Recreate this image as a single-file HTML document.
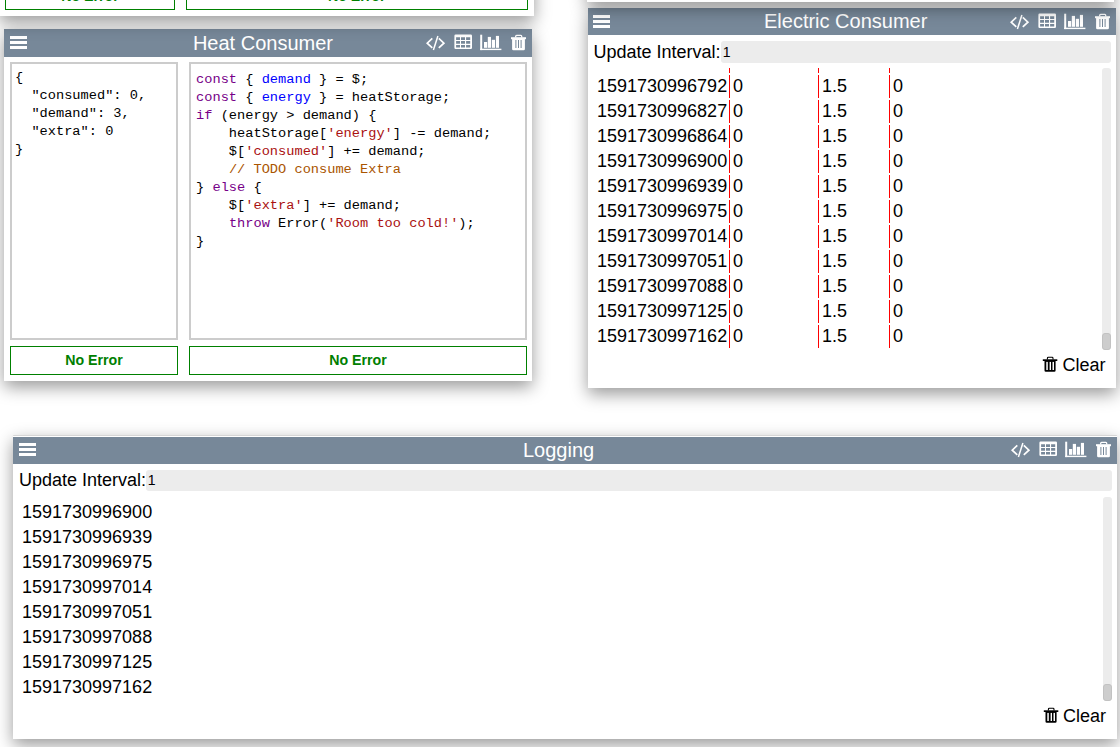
<!DOCTYPE html>
<html><head><meta charset="utf-8">
<style>
html,body{margin:0;padding:0;}
body{width:1120px;height:747px;overflow:hidden;position:relative;background:#fff;font-family:"Liberation Sans",sans-serif;color:#000;}
.p{position:absolute;background:#fff;box-shadow:0 6px 16px rgba(0,0,0,0.4);}
.hd{position:absolute;background:#778899;color:#fff;}
.ttl{position:absolute;font-size:20px;line-height:20px;white-space:nowrap;}
.ham{position:absolute;width:16.5px;height:13px;}
.ham i{position:absolute;left:0;width:16.5px;height:3px;background:#fff;}
.icons{position:absolute;width:101px;height:17px;}
.ta{position:absolute;border:2px solid #ccc;box-sizing:border-box;font-family:"Liberation Mono",monospace;font-size:13.66px;line-height:18px;white-space:pre;color:#000;}
.btn{position:absolute;border:1px solid #008000;box-sizing:border-box;color:#008000;font-weight:bold;font-size:14.2px;text-align:center;}
.lbl{position:absolute;font-size:18px;line-height:20px;white-space:nowrap;}
.inp{position:absolute;background:#ececec;border-radius:3px;}
.inp span{position:absolute;font-size:14px;line-height:14px;}
.trk{position:absolute;background:#ececec;border-radius:3px;}
.thm{position:absolute;background:#cdcdcd;border:1px solid #c2c2c2;box-sizing:border-box;border-radius:3px;}
.row{position:absolute;font-size:18px;line-height:20px;white-space:nowrap;}
.sep{position:absolute;width:1px;background:#f00;}
.clr{position:absolute;font-size:18px;line-height:20px;white-space:nowrap;}
.kw{color:#708}.df{color:#00f}.st{color:#a11}.cm{color:#a50}
</style></head><body>

<!-- top-left panel (mostly offscreen) -->
<div class="p" style="left:-1px;top:-100px;width:535px;height:115.7px;z-index:2;">
  <div class="btn" style="left:6px;top:70px;width:170px;height:40px;"><div style="position:absolute;left:0;right:0;top:17px;">No Error</div></div>
  <div class="btn" style="left:187px;top:70px;width:341.6px;height:40px;"><div style="position:absolute;left:0;right:0;top:17px;">No Error</div></div>
</div>

<!-- top-right panel (mostly offscreen) -->
<div class="p" style="left:587px;top:-100px;width:527px;height:101.8px;z-index:2;"></div>

<!-- Heat Consumer -->
<div class="p" style="left:4px;top:29px;width:528px;height:352px;">
  <div class="hd" style="left:0;top:0;width:528px;height:28px;">
    <div class="ham" style="left:6px;top:7px;"><i style="top:0"></i><i style="top:5px"></i><i style="top:10px"></i></div>
    <div class="ttl" style="left:188.9px;top:3.5px;">Heat Consumer</div>
    <svg class="icons" style="left:422px;top:5px;" viewBox="0 0 101 17"><use href="#ic"/></svg>
  </div>
  <div class="ta" style="left:6px;top:33px;width:168px;height:278px;padding:5.2px 0 0 3px;">{
  "consumed": 0,
  "demand": 3,
  "extra": 0
}</div>
  <div class="ta" style="left:185px;top:33px;width:338px;height:278px;padding:7.3px 0 0 5.1px;"><span class="kw">const</span> { <span class="df">demand</span> } = $;
<span class="kw">const</span> { <span class="df">energy</span> } = heatStorage;
<span class="kw">if</span> (energy &gt; demand) {
    heatStorage[<span class="st">'energy'</span>] -= demand;
    $[<span class="st">'consumed'</span>] += demand;
    <span class="cm">// TODO consume Extra</span>
} <span class="kw">else</span> {
    $[<span class="st">'extra'</span>] += demand;
    <span class="kw">throw</span> Error(<span class="st">'Room too cold!'</span>);
}</div>
  <div class="btn" style="left:6px;top:317px;width:168px;height:29px;line-height:27px;">No Error</div>
  <div class="btn" style="left:185px;top:317px;width:338px;height:29px;line-height:27px;">No Error</div>
</div>

<!-- Electric Consumer -->
<div class="p" style="left:588px;top:8px;width:528px;height:380px;">
  <div class="hd" style="left:0;top:0;width:528px;height:26.7px;">
    <div class="ham" style="left:5px;top:7px;"><i style="top:0"></i><i style="top:5px"></i><i style="top:10px"></i></div>
    <div class="ttl" style="left:176px;top:3px;">Electric Consumer</div>
    <svg class="icons" style="left:422px;top:5px;" viewBox="0 0 101 17"><use href="#ic"/></svg>
  </div>
  <div class="lbl" style="left:5.5px;top:34px;">Update Interval:</div>
  <div class="inp" style="left:132.7px;top:33.1px;width:390.3px;height:21.5px;"><span style="left:2px;top:4px;">1</span></div>
  <div class="trk" style="left:514px;top:60.3px;width:9px;height:281.5px;"></div>
  <div class="thm" style="left:514px;top:325.2px;width:9px;height:16.6px;"></div>
  <div class="sep" style="left:141px;top:60px;height:5px"></div><div class="sep" style="left:230px;top:60px;height:5px"></div><div class="sep" style="left:301px;top:60px;height:5px"></div>
<div class="row" style="left:9px;top:68px">1591730996792</div><div class="sep" style="left:141px;top:67px;height:23px"></div><div class="row" style="left:145px;top:68px">0</div><div class="sep" style="left:230px;top:67px;height:23px"></div><div class="row" style="left:234px;top:68px">1.5</div><div class="sep" style="left:301px;top:67px;height:23px"></div><div class="row" style="left:305px;top:68px">0</div>
<div class="row" style="left:9px;top:93px">1591730996827</div><div class="sep" style="left:141px;top:92px;height:23px"></div><div class="row" style="left:145px;top:93px">0</div><div class="sep" style="left:230px;top:92px;height:23px"></div><div class="row" style="left:234px;top:93px">1.5</div><div class="sep" style="left:301px;top:92px;height:23px"></div><div class="row" style="left:305px;top:93px">0</div>
<div class="row" style="left:9px;top:118px">1591730996864</div><div class="sep" style="left:141px;top:117px;height:23px"></div><div class="row" style="left:145px;top:118px">0</div><div class="sep" style="left:230px;top:117px;height:23px"></div><div class="row" style="left:234px;top:118px">1.5</div><div class="sep" style="left:301px;top:117px;height:23px"></div><div class="row" style="left:305px;top:118px">0</div>
<div class="row" style="left:9px;top:143px">1591730996900</div><div class="sep" style="left:141px;top:142px;height:23px"></div><div class="row" style="left:145px;top:143px">0</div><div class="sep" style="left:230px;top:142px;height:23px"></div><div class="row" style="left:234px;top:143px">1.5</div><div class="sep" style="left:301px;top:142px;height:23px"></div><div class="row" style="left:305px;top:143px">0</div>
<div class="row" style="left:9px;top:168px">1591730996939</div><div class="sep" style="left:141px;top:167px;height:23px"></div><div class="row" style="left:145px;top:168px">0</div><div class="sep" style="left:230px;top:167px;height:23px"></div><div class="row" style="left:234px;top:168px">1.5</div><div class="sep" style="left:301px;top:167px;height:23px"></div><div class="row" style="left:305px;top:168px">0</div>
<div class="row" style="left:9px;top:193px">1591730996975</div><div class="sep" style="left:141px;top:192px;height:23px"></div><div class="row" style="left:145px;top:193px">0</div><div class="sep" style="left:230px;top:192px;height:23px"></div><div class="row" style="left:234px;top:193px">1.5</div><div class="sep" style="left:301px;top:192px;height:23px"></div><div class="row" style="left:305px;top:193px">0</div>
<div class="row" style="left:9px;top:218px">1591730997014</div><div class="sep" style="left:141px;top:217px;height:23px"></div><div class="row" style="left:145px;top:218px">0</div><div class="sep" style="left:230px;top:217px;height:23px"></div><div class="row" style="left:234px;top:218px">1.5</div><div class="sep" style="left:301px;top:217px;height:23px"></div><div class="row" style="left:305px;top:218px">0</div>
<div class="row" style="left:9px;top:243px">1591730997051</div><div class="sep" style="left:141px;top:242px;height:23px"></div><div class="row" style="left:145px;top:243px">0</div><div class="sep" style="left:230px;top:242px;height:23px"></div><div class="row" style="left:234px;top:243px">1.5</div><div class="sep" style="left:301px;top:242px;height:23px"></div><div class="row" style="left:305px;top:243px">0</div>
<div class="row" style="left:9px;top:268px">1591730997088</div><div class="sep" style="left:141px;top:267px;height:23px"></div><div class="row" style="left:145px;top:268px">0</div><div class="sep" style="left:230px;top:267px;height:23px"></div><div class="row" style="left:234px;top:268px">1.5</div><div class="sep" style="left:301px;top:267px;height:23px"></div><div class="row" style="left:305px;top:268px">0</div>
<div class="row" style="left:9px;top:293px">1591730997125</div><div class="sep" style="left:141px;top:292px;height:23px"></div><div class="row" style="left:145px;top:293px">0</div><div class="sep" style="left:230px;top:292px;height:23px"></div><div class="row" style="left:234px;top:293px">1.5</div><div class="sep" style="left:301px;top:292px;height:23px"></div><div class="row" style="left:305px;top:293px">0</div>
<div class="row" style="left:9px;top:318px">1591730997162</div><div class="sep" style="left:141px;top:317px;height:23px"></div><div class="row" style="left:145px;top:318px">0</div><div class="sep" style="left:230px;top:317px;height:23px"></div><div class="row" style="left:234px;top:318px">1.5</div><div class="sep" style="left:301px;top:317px;height:23px"></div><div class="row" style="left:305px;top:318px">0</div>

  <div class="clr" style="left:455.4px;top:347px;"><svg style="position:absolute;left:0;top:1px;overflow:visible" width="14" height="16" viewBox="0 0 14 16"><use href="#tr"/></svg><span style="position:absolute;left:19px;top:0;">Clear</span></div>
</div>

<!-- Logging -->
<div class="p" style="left:13px;top:435.3px;width:1104px;height:303.7px;">
  <div style="position:absolute;left:0;top:-0.3px;width:1104px;height:1px;background:#d6d6d6;border-radius:1px;"></div>
  <div class="hd" style="left:0;top:1.7px;width:1104px;height:26.7px;">
    <div class="ham" style="left:6px;top:5.6px;"><i style="top:0"></i><i style="top:5px"></i><i style="top:10px"></i></div>
    <div class="ttl" style="left:510px;top:3px;">Logging</div>
    <svg class="icons" style="left:998px;top:4.5px;" viewBox="0 0 101 17"><use href="#ic"/></svg>
  </div>
  <div class="lbl" style="left:6px;top:34.7px;">Update Interval:</div>
  <div class="inp" style="left:132.7px;top:34.7px;width:966.3px;height:20.9px;"><span style="left:2px;top:3px;">1</span></div>
  <div class="trk" style="left:1090px;top:61.7px;width:9px;height:203.7px;"></div>
  <div class="thm" style="left:1090px;top:248.9px;width:9px;height:16.5px;"></div>
  <div class="row" style="left:9px;top:67px">1591730996900</div>
<div class="row" style="left:9px;top:92px">1591730996939</div>
<div class="row" style="left:9px;top:117px">1591730996975</div>
<div class="row" style="left:9px;top:142px">1591730997014</div>
<div class="row" style="left:9px;top:167px">1591730997051</div>
<div class="row" style="left:9px;top:192px">1591730997088</div>
<div class="row" style="left:9px;top:217px">1591730997125</div>
<div class="row" style="left:9px;top:242px">1591730997162</div>

  <div class="clr" style="left:1031px;top:271px;"><svg style="position:absolute;left:0;top:1px;overflow:visible" width="14" height="16" viewBox="0 0 14 16"><use href="#tr"/></svg><span style="position:absolute;left:19px;top:0;">Clear</span></div>
</div>

<svg width="0" height="0" style="position:absolute">
  <defs>
    <g id="ic" fill="#fff" stroke="none">
      <polyline points="6.3,4.3 1.2,9.2 6.3,13.9" fill="none" stroke="#fff" stroke-width="1.7"/>
      <line x1="11.9" y1="2" x2="7.4" y2="15.9" stroke="#fff" stroke-width="1.5"/>
      <polyline points="12.8,4.3 17.9,9.2 12.8,13.9" fill="none" stroke="#fff" stroke-width="1.7"/>
      <path d="M29.6,0.5h15.2a1.2,1.2 0 0 1 1.2,1.2v12.1a1.2,1.2 0 0 1 -1.2,1.2h-15.2a1.2,1.2 0 0 1 -1.2,-1.2v-12.1a1.2,1.2 0 0 1 1.2,-1.2z M30.1,3.3v2.6h3.9v-2.6z M35.0,3.3v2.6h4.0v-2.6z M40.1,3.3v2.6h4.1v-2.6z M30.1,7.0v2.7h3.9v-2.7z M35.0,7.0v2.7h4.0v-2.7z M40.1,7.0v2.7h4.1v-2.7z M30.1,11.0v2.6h3.9v-2.6z M35.0,11.0v2.6h4.0v-2.6z M40.1,11.0v2.6h4.1v-2.6z" fill-rule="evenodd"/>
      <rect x="54.2" y="0.7" width="2" height="15.4"/>
      <rect x="54.2" y="14.7" width="21.2" height="1.4"/>
      <rect x="58" y="8" width="3.2" height="5.8"/>
      <rect x="61.8" y="2.9" width="3.2" height="10.9"/>
      <rect x="65.8" y="5.8" width="3.2" height="8"/>
      <rect x="69.9" y="1.9" width="3.1" height="11.9"/>
      <path d="M89.7,3.5v-1.2a0.9,0.9 0 0 1 0.9,-0.9h4.2a0.9,0.9 0 0 1 0.9,0.9v1.2" fill="none" stroke="#fff" stroke-width="1.3"/>
      <rect x="85" y="3.2" width="15" height="2"/>
      <path d="M86.1,5.1h12.8v9.9q0,1.3 -1.3,1.3h-10.2q-1.3,0 -1.3,-1.3z M89.4,5.9v8h1v-8z M92,5.9v8h1v-8z M94.6,5.9v8h1v-8z" fill-rule="evenodd"/>
    </g>
    <g id="tr" fill="#000">
      <path d="M4.4,3.5v-1.3a0.9,0.9 0 0 1 0.9,-0.9h3.8a0.9,0.9 0 0 1 0.9,0.9v1.3" fill="none" stroke="#000" stroke-width="1.1"/>
      <rect x="-0.2" y="3.3" width="14.5" height="1.7"/>
      <path d="M1.5,4.9h11.1v9.6q0,1.3 -1.3,1.3h-8.5q-1.3,0 -1.3,-1.3z"/>
      <rect x="3.3" y="5.9" width="1.5" height="8.1" fill="#fff"/>
      <rect x="6.6" y="5.9" width="1.4" height="8.1" fill="#fff"/>
      <rect x="9.5" y="5.9" width="1.5" height="8.1" fill="#fff"/>
    </g>
  </defs>
</svg>

</body></html>
